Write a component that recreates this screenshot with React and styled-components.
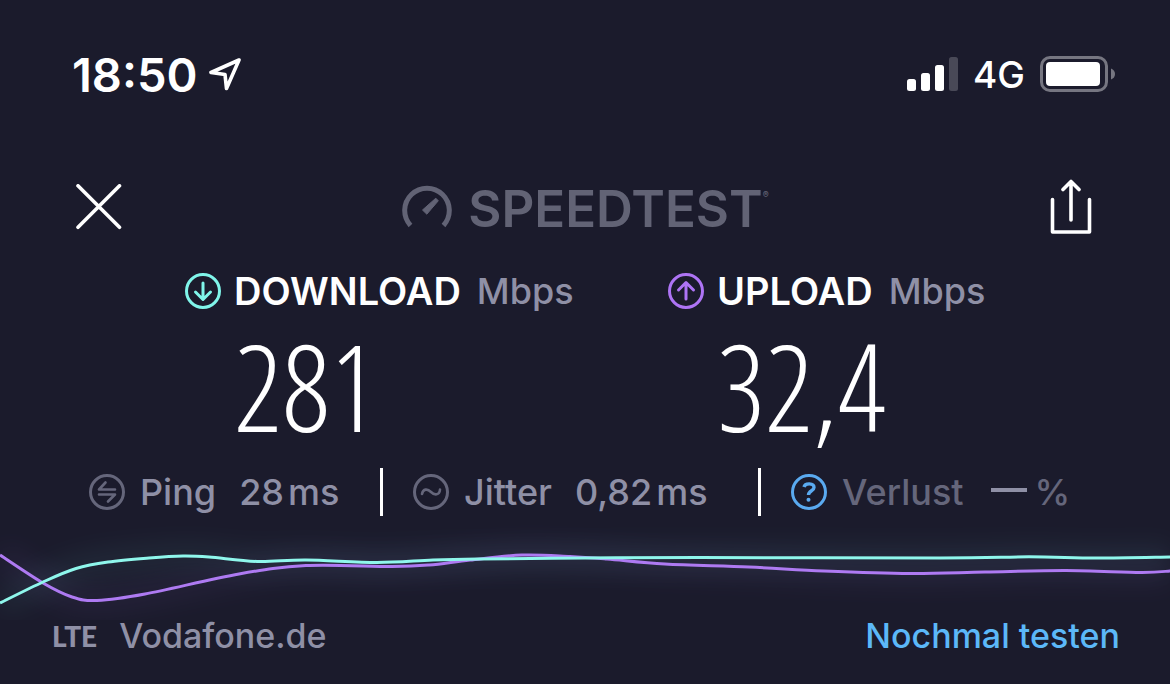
import React from "react";
import styled, { createGlobalStyle } from "styled-components";

const GlobalStyle = createGlobalStyle`
  *, *::before, *::after {
    box-sizing: border-box;
  }

  body {
    margin: 0;
    background: #1b1b2c;
  }
`;

const Page = styled.main`
  width: 100%;
  padding: 54px 0 32px;
  overflow: hidden;
  background: #1b1b2c;
  color: #ffffff;
  font-family: Inter, "Liberation Sans", sans-serif;
  font-weight: 500;
`;

const StatusBar = styled.div`
  display: flex;
  align-items: center;
  justify-content: space-between;
  height: 42px;
  padding: 0 54px 0 72px;
`;

const StatusGroup = styled.div`
  display: flex;
  align-items: center;
  gap: ${(props) => props.$gap}px;
`;

const Time = styled.span`
  font-size: 47px;
  font-weight: 600;
  line-height: 42px;
`;

const Network = styled.span`
  font-size: 37px;
  line-height: 42px;
`;

const Header = styled.header`
  display: flex;
  align-items: center;
  justify-content: space-between;
  height: 56px;
  margin-top: 83px;
  padding: 0 77px 0 76px;
`;

const IconButton = styled.button`
  display: flex;
  padding: 0;
  border: 0;
  background: none;
  color: inherit;
  cursor: pointer;
`;

const Brand = styled.div`
  display: flex;
  align-items: center;
  gap: 16px;
  color: #626375;
`;

const BrandName = styled.h1`
  display: flex;
  margin: 0;
  padding-top: 3px;
  font-size: 51px;
  font-weight: 600;
  line-height: 56px;
`;

const Registered = styled.sup`
  margin-top: 9px;
  font-size: 9px;
  line-height: 9px;
`;

const Results = styled.section`
  display: grid;
  grid-template-columns: 1fr 1fr;
  margin-top: 38px;
  padding: 0 19px 0 185px;
`;

const ResultLabel = styled.h2`
  display: flex;
  align-items: center;
  gap: 13px;
  margin: 0;
  font-size: 38px;
  font-weight: 600;
  line-height: 36px;
`;

const Unit = styled.span`
  margin-left: 3px;
  color: #8f90a6;
  font-size: 36px;
  font-weight: 500;
`;

const ResultValue = styled.p`
  margin: 31px 0 0 49px;
  font-family: "Open Sans Condensed Light", "Roboto Condensed", Roboto, sans-serif;
  font-size: 120px;
  font-weight: 200;
  line-height: 92px;
`;

const Stats = styled.section`
  display: grid;
  grid-template-columns: 294fr 378fr 378fr;
  margin-top: 36px;
  padding: 0 31px 0 89px;
`;

const Stat = styled.div`
  display: flex;
  align-items: center;
  height: 48px;
  color: ${(props) => (props.$dim ? "#65667b" : "#8f90a6")};
  font-size: 36px;
  white-space: nowrap;

  & + & {
    padding-left: 30px;
  }

  &:not(:last-child) {
    border-right: 3px solid #ffffff;
  }
`;

const StatName = styled.span`
  margin-left: 15px;
`;

const StatValue = styled.span`
  display: flex;
  align-items: center;
  gap: 4px;
  margin-left: 23px;
`;

const Dash = styled.span`
  width: 36px;
  height: 4px;
  margin: 0 4px 4px;
  background: #8f90a6;
`;

const Chart = styled.svg`
  display: block;
  width: 100%;
  height: 104px;
`;

const Footer = styled.footer`
  display: flex;
  align-items: center;
  height: 32px;
  padding: 0 50px 0 52px;
  color: #8f90a6;
  font-size: 34px;
  line-height: 32px;
`;

const Tech = styled.span`
  margin-right: 22px;
  font-family: Lato, sans-serif;
  font-size: 28px;
  font-weight: 900;
`;

const RetryLink = styled.a`
  margin-left: auto;
  color: #5cb8f8;
  text-decoration: none;
`;

const UPLOAD_POINTS = [
  [0, 555], [43, 583], [72, 597], [97, 600.5], [145, 594], [239, 574], [306, 565.5], [392, 566.5],
  [429, 565], [470, 560], [522, 555], [570, 556.5], [607, 559], [665, 564], [749, 567],
  [824, 571], [910, 573.5], [985, 572], [1066, 570.5], [1141, 572.5], [1170, 571],
];

const DOWNLOAD_POINTS = [
  [0, 603], [43, 582], [76, 568.5], [108, 562], [149, 558], [183, 556], [209, 557], [257, 561.5],
  [306, 560], [377, 562.5], [433, 560], [478, 559], [585, 558], [700, 557.5], [940, 558],
  [1029, 556.8], [1096, 558], [1170, 557],
];

// Catmull-Rom spline through the samples, y measured from the chart top
function toPath(points) {
  const p = points.map(([x, y]) => [x, y - 516]);
  let d = `M${p[0][0]} ${p[0][1]}`;
  for (let i = 0; i < p.length - 1; i += 1) {
    const a = p[i - 1] || p[i];
    const b = p[i];
    const c = p[i + 1];
    const e = p[i + 2] || c;
    d += ` C${b[0] + (c[0] - a[0]) / 6} ${b[1] + (c[1] - a[1]) / 6}`;
    d += ` ${c[0] - (e[0] - b[0]) / 6} ${c[1] - (e[1] - b[1]) / 6} ${c[0]} ${c[1]}`;
  }
  return d;
}

function RoundIcon({ color, children }) {
  return (
    <svg width="36" height="36" viewBox="0 0 36 36" fill="none" stroke={color} strokeWidth="3" strokeLinecap="round" strokeLinejoin="round" aria-hidden="true">
      <circle cx="18" cy="18" r="16.5" />
      {children}
    </svg>
  );
}

function LocationIcon() {
  return (
    <svg width="34" height="34" viewBox="0 0 34 34" fill="none" stroke="#fff" strokeWidth="3.6" strokeLinejoin="round" aria-hidden="true">
      <path d="M30 2 L2 14.5 L16 16.5 L17.5 30.5 Z" />
    </svg>
  );
}

function SignalIcon() {
  return (
    <svg width="51" height="36" viewBox="0 0 51 36" fill="#fff" aria-hidden="true">
      <rect x="0" y="22" width="9" height="12" rx="2.5" />
      <rect x="14" y="16" width="9" height="18" rx="2.5" />
      <rect x="28" y="8" width="9" height="26" rx="2.5" />
      <rect x="42" y="0" width="9" height="34" rx="2.5" fill="#494957" />
    </svg>
  );
}

function BatteryIcon() {
  return (
    <svg width="76" height="38" viewBox="0 0 76 38" aria-hidden="true">
      <rect x="1.5" y="1.5" width="65" height="33" rx="8.5" fill="none" stroke="#767681" strokeWidth="3" />
      <rect x="6" y="6" width="54" height="24" rx="4" fill="#fff" />
      <path d="M71 12.5 Q75 14 75 18 Q75 22 71 23.5 Z" fill="#767681" />
    </svg>
  );
}

function CloseIcon() {
  return (
    <svg width="46" height="46" viewBox="0 0 46 46" stroke="#fff" strokeWidth="3.6" strokeLinecap="round" aria-hidden="true">
      <path d="M2 1.8 L43.5 43.3 M43.5 1.8 L2 43.3" />
    </svg>
  );
}

function ShareIcon() {
  return (
    <svg width="44" height="56" viewBox="0 0 44 56" fill="none" stroke="#fff" strokeWidth="3.6" strokeLinecap="round" strokeLinejoin="round" aria-hidden="true">
      <path d="M3.5 20.5 V53 H40.5 V20.5" />
      <path d="M22 41 V3 M14 10.5 L22 2.5 L30 10.5" />
    </svg>
  );
}

function GaugeIcon() {
  return (
    <svg width="50" height="44" viewBox="0 0 50 44" aria-hidden="true">
      <path d="M8.5 40.5 A22.3 22.3 0 1 1 41.5 40.5" fill="none" stroke="currentColor" strokeWidth="5" />
      <path d="M20.5 25 L33.8 13.2 L36.3 15.8 L24.8 29.2 Z" fill="currentColor" stroke="currentColor" strokeWidth="1" strokeLinejoin="round" />
    </svg>
  );
}

function Graph() {
  const download = toPath(DOWNLOAD_POINTS);
  const upload = toPath(UPLOAD_POINTS);
  return (
    <Chart viewBox="0 0 1170 104" preserveAspectRatio="none" fill="none" role="img" aria-label="Download / Upload">
      <defs>
        <filter id="glow" x="-5%" y="-100%" width="110%" height="300%">
          <feGaussianBlur stdDeviation="12" />
        </filter>
      </defs>
      <path d={upload} stroke="#b07cf5" strokeWidth="26" opacity="0.06" filter="url(#glow)" />
      <path d={download} stroke="#7ff7ee" strokeWidth="26" opacity="0.06" filter="url(#glow)" />
      <path d={upload} stroke="#ae7af2" strokeWidth="3" />
      <path d={download} stroke="#8ff7ec" strokeWidth="3" />
    </Chart>
  );
}

function App() {
  return (
    <Page>
      <GlobalStyle />
      <StatusBar>
        <StatusGroup $gap={11}>
          <Time>18:50</Time>
          <LocationIcon />
        </StatusGroup>
        <StatusGroup $gap={15}>
          <SignalIcon />
          <Network>4G</Network>
          <BatteryIcon />
        </StatusGroup>
      </StatusBar>

      <Header>
        <IconButton type="button" aria-label="Schließen"><CloseIcon /></IconButton>
        <Brand>
          <GaugeIcon />
          <BrandName>
            SPEEDTEST
            <Registered>®</Registered>
          </BrandName>
        </Brand>
        <IconButton type="button" aria-label="Teilen"><ShareIcon /></IconButton>
      </Header>

      <Results>
        <div>
          <ResultLabel>
            <RoundIcon color="#80f5ea"><path d="M18 10 V26 M10.5 19 L18 26.5 L25.5 19" /></RoundIcon>
            DOWNLOAD
            <Unit>Mbps</Unit>
          </ResultLabel>
          <ResultValue>281</ResultValue>
        </div>
        <div>
          <ResultLabel>
            <RoundIcon color="#ae74f5"><path d="M18 26 V10 M10.5 17 L18 9.5 L25.5 17" /></RoundIcon>
            UPLOAD
            <Unit>Mbps</Unit>
          </ResultLabel>
          <ResultValue>32,4</ResultValue>
        </div>
      </Results>

      <Stats>
        <Stat>
          <RoundIcon color="#65667b">
            <path d="M16.5 8.5 L10 15.5 H26 M10 20.5 H26 L19 27.5" strokeWidth="2.6" />
          </RoundIcon>
          <StatName>Ping</StatName>
          <StatValue>
            <span>28</span>
            <span>ms</span>
          </StatValue>
        </Stat>
        <Stat>
          <RoundIcon color="#65667b">
            <path d="M9 20 C10 14.5 14.5 14.5 18 18 C21.5 21.5 26.5 21.5 27 15.5" strokeWidth="2.6" />
          </RoundIcon>
          <StatName>Jitter</StatName>
          <StatValue>
            <span>0,82</span>
            <span>ms</span>
          </StatValue>
        </Stat>
        <Stat $dim>
          <RoundIcon color="#5aaaf0">
            <path d="M13 13 C14 8.8 23 8.8 23 13.5 C23 17 17.5 16.5 17.5 21" strokeWidth="3.4" strokeLinecap="butt" />
            <circle cx="17.5" cy="25.8" r="2" fill="#5aaaf0" stroke="none" />
          </RoundIcon>
          <StatName>Verlust</StatName>
          <StatValue>
            <Dash />
            <span>%</span>
          </StatValue>
        </Stat>
      </Stats>

      <Graph />

      <Footer>
        <Tech>LTE</Tech>
        <span>Vodafone.de</span>
        <RetryLink href="#">Nochmal testen</RetryLink>
      </Footer>
    </Page>
  );
}

export default App;
